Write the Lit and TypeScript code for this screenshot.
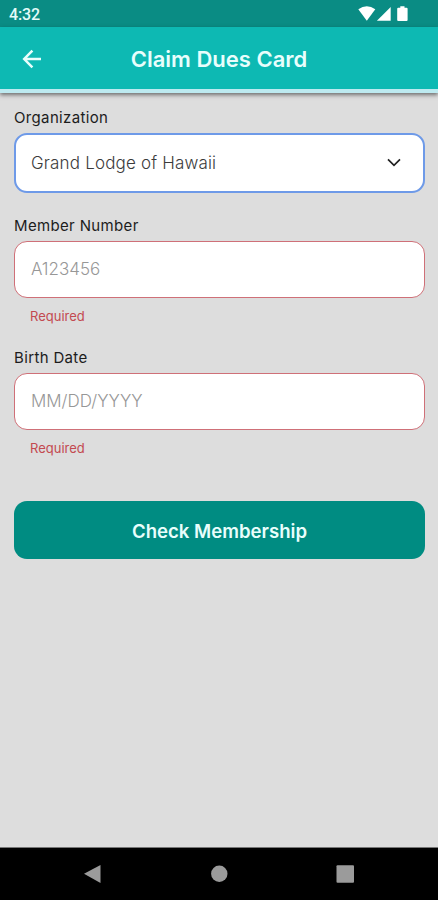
import { LitElement, html, css, nothing } from "lit";
import { customElement, property } from "lit/decorators.js";

@customElement("status-bar")
class StatusBar extends LitElement {
  static styles = css`
    :host {
      display: flex;
      align-items: center;
      height: 27px;
      background: #0a8c84;
      color: #e4fbf9;
    }
    .time {
      flex: 1;
      padding: 2px 0 0 9px;
      font: 500 16px/20px Roboto, sans-serif;
      letter-spacing: -0.1px;
    }
    svg {
      display: block;
      width: 80px;
      height: 27px;
    }
  `;
  render() {
    return html`
      <span class="time">4:32</span>
      <svg viewBox="358 0 80 27" fill="#fff">
        <path d="M358.3 9.3Q366.8 3.2 375.3 9.3L366.8 20.8Z" />
        <path d="M390.7 7V20.8H376.9Z" />
        <path d="M400.3 6.2h4.2v1.6h2.1q1 0 1 1v11.2q0 1-1 1h-8.4q-1 0-1-1v-11.2q0-1 1-1h2.1z" />
      </svg>
    `;
  }
}

@customElement("form-field")
class FormField extends LitElement {
  @property() label = "";
  @property() kind = "";
  @property() error = "";
  static styles = css`
    :host {
      display: block;
    }
    .label {
      font-size: 15px;
      line-height: 20px;
      letter-spacing: 0.35px;
      color: #1c1c1c;
      margin-bottom: 5px;
    }
    .box {
      box-sizing: border-box;
      height: 57px;
      border: 1.5px solid #cf7078;
      border-radius: 13px;
      background: #fff;
      padding: 0 22px 2px 16px;
      display: flex;
      align-items: center;
      justify-content: space-between;
      color: #979797;
      font-size: 17px;
      font-weight: 300;
    }
    .select {
      height: 60px;
      border: 2px solid #6e9ae8;
      padding: 0 22px 1px 15px;
      color: #3c3c3c;
      letter-spacing: 0.17px;
    }
    .error {
      padding: 9px 0 0 16px;
      font-size: 13px;
      line-height: 18px;
      color: #c34a50;
    }
    svg {
      width: 14px;
      height: 9px;
    }
  `;
  render() {
    return html`
      <div class="label">${this.label}</div>
      <div class="box ${this.kind}">
        <slot></slot>
        ${this.kind === "select"
          ? html`<svg viewBox="0 0 14 9" fill="none" stroke="#222" stroke-width="1.7">
              <path d="M1 1.3L7 7.3L13 1.3" />
            </svg>`
          : nothing}
      </div>
      ${this.error ? html`<div class="error">${this.error}</div>` : nothing}
    `;
  }
}

@customElement("app-root")
class AppRoot extends LitElement {
  static styles = css`
    :host {
      display: flex;
      flex-direction: column;
      height: 900px;
      background: #ddd;
      font-family: Inter, "Open Sans", sans-serif;
    }
    header {
      box-sizing: border-box;
      height: 66px;
      display: grid;
      grid-template-columns: 64px 1fr 64px;
      align-items: center;
      background: #0db9b3;
      border-bottom: 4px solid #bdeaf0;
      box-shadow: 0 2px 4px rgba(0, 0, 0, 0.5);
      color: #e8fefc;
    }
    .back {
      width: 20px;
      height: 20px;
      margin: 1px 0 0 22px;
    }
    h1 {
      margin: 1px 0 0;
      text-align: center;
      font-size: 22px;
      font-weight: 600;
      line-height: 30px;
    }
    main {
      flex: 1;
      padding: 15px 13px 0 14px;
    }
    .number {
      margin-top: 23px;
    }
    .date {
      margin-top: 23px;
    }
    button {
      display: block;
      width: 100%;
      height: 58px;
      padding: 1px 0 0;
      margin-top: 44px;
      border: 0;
      border-radius: 13px;
      background: #008c82;
      color: #e8fefc;
      font: 600 18.6px/26px Inter, sans-serif;
    }
    nav {
      height: 53px;
      background: #000;
      border-top: 1px solid #777;
      box-sizing: border-box;
    }
    nav svg {
      display: block;
      width: 438px;
      height: 52px;
    }
  `;
  render() {
    return html`
      <status-bar></status-bar>
      <header>
        <svg class="back" viewBox="0 0 20 20" fill="none" stroke="#e8fefc" stroke-width="2.5">
          <path d="M19 10H2.5M10.4 1.6L2.2 10L10.4 18.4" />
        </svg>
        <h1>Claim Dues Card</h1>
      </header>
      <main>
        <form-field label="Organization" kind="select"><span>Grand Lodge of Hawaii</span></form-field>
        <form-field class="number" label="Member Number" error="Required"><span>A123456</span></form-field>
        <form-field class="date" label="Birth Date" error="Required"><span>MM/DD/YYYY</span></form-field>
        <button>Check Membership</button>
      </main>
      <nav>
        <svg viewBox="0 848 438 52" fill="#9b9b9b">
          <path d="M84 873.7L100.5 865V883Z" />
          <circle cx="219.3" cy="873.7" r="8.2" />
          <rect x="336.5" y="865.3" width="17.5" height="17.5" rx="1" />
        </svg>
      </nav>
    `;
  }
}
